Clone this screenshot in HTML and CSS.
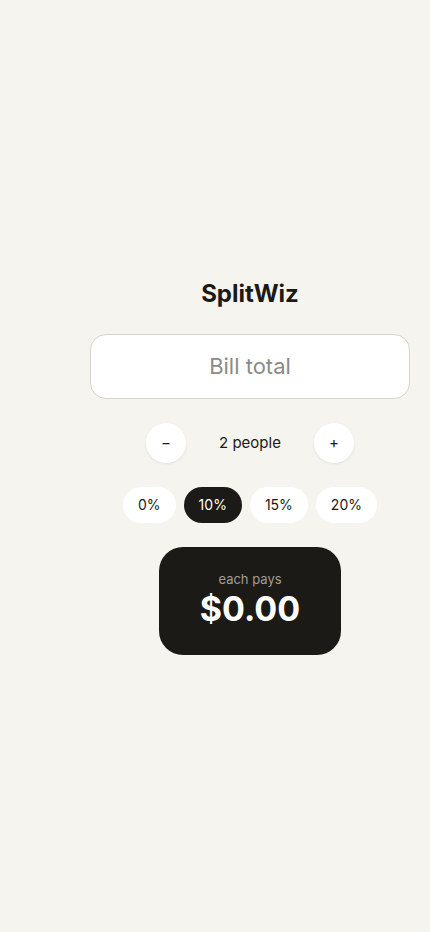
FILE: index.html
```html
<!DOCTYPE html>
<html lang="en">
<head>
    <meta charset="UTF-8">
    <meta name="viewport" content="width=device-width, initial-scale=1.0">
    <title>SplitWiz</title>
    <link rel="stylesheet" href="styles.css">
</head>
<body>
    <main class="app">
        <h1 class="title">SplitWiz</h1>
        <input class="bill" type="text" placeholder="Bill total">
        <div class="stepper">
            <button class="step">&minus;</button>
            <span class="people">2 people</span>
            <button class="step">+</button>
        </div>
        <div class="tips">
            <button class="tip">0%</button>
            <button class="tip active">10%</button>
            <button class="tip">15%</button>
            <button class="tip">20%</button>
        </div>
        <div class="result">
            <div class="label">each pays</div>
            <div class="amount">$0.00</div>
        </div>
    </main>
</body>
</html>
```

FILE: styles.css
```css
body {
    margin: 0;
    min-height: 100vh;
    padding-left: 70px;
    display: flex;
    justify-content: center;
    align-items: center;
    background-color: #f6f4ef;
    font-family: Inter, "Noto Sans", sans-serif;
    color: #1c1a16;
}
.app {
    display: flex;
    flex-direction: column;
    align-items: center;
    gap: 24px;
    padding-top: 2px;
}
.title {
    margin: 0 0 2px;
    font-size: 24px;
    line-height: 28px;
    font-weight: 700;
}
.bill {
    box-sizing: border-box;
    width: 320px;
    height: 65px;
    border: 1px solid #d9d4c8;
    border-radius: 16px;
    background: #fff;
    font-family: inherit;
    font-size: 22px;
    text-align: center;
    color: #1c1a16;
    outline: none;
}
.bill::placeholder {
    color: #8c8a86;
}
.stepper {
    display: flex;
    align-items: center;
    gap: 33px;
}
.step {
    width: 40px;
    height: 40px;
    border: none;
    border-radius: 50%;
    background: #fff;
    box-shadow: 0 1px 3px rgba(0, 0, 0, 0.08);
    font-family: inherit;
    font-size: 15px;
    color: #1c1a16;
    padding: 0;
}
.people {
    font-size: 15px;
}
.tips {
    display: flex;
    gap: 8px;
}
.tip {
    height: 36px;
    padding: 0 15px;
    border: none;
    border-radius: 18px;
    background: #fff;
    font-family: inherit;
    font-size: 14px;
    color: #1c1a16;
}
.tip.active {
    background: #1c1a16;
    color: #fff;
}
.result {
    width: 182px;
    height: 108px;
    box-sizing: border-box;
    border-radius: 24px;
    background: #1c1a16;
    color: #fff;
    display: flex;
    flex-direction: column;
    align-items: center;
    justify-content: center;
}
.label {
    font-size: 13px;
    color: #a19d95;
}
.amount {
    font-size: 34px;
    font-weight: 700;
    line-height: 44px;
}
```
